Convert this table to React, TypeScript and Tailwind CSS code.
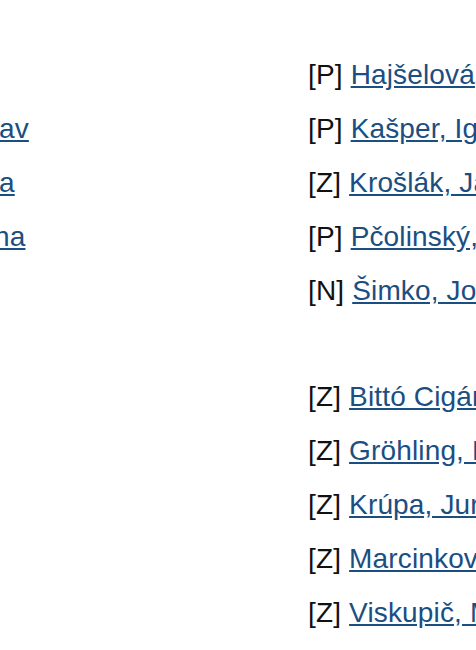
import React from "react";

const linkCls = "text-[#1b4e81] underline decoration-[#1b4e81]";

const groupA = [
  ["P", "Hajšelová"],
  ["P", "Kašper, Ig"],
  ["Z", "Krošlák, Ja"],
  ["P", "Pčolinský,"],
  ["N", "Šimko, Jo"],
];
const groupB = [
  ["Z", "Bittó Cigán"],
  ["Z", "Gröhling, B"],
  ["Z", "Krúpa, Jur"],
  ["Z", "Marcinkov"],
  ["Z", "Viskupič, M"],
];

function Row({ tag, name }: { tag: string; name: string }) {
  return (
    <div className="h-[54px] leading-[54px] whitespace-nowrap">
      <span className="text-[#111]">[{tag}]</span>{" "}
      <a href="#" className={linkCls}>
        {name}
      </a>
    </div>
  );
}

export default function App() {
  return (
    <div
      className="w-[476px] h-[650px] overflow-hidden bg-white flex text-[28px] tracking-[0.15px]"
      style={{ fontFamily: '"Liberation Sans", Arial, sans-serif' }}
    >
      <div className="w-[308px] shrink-0 pt-[48px]">
        <div className="h-[54px]" />
        <div className="h-[54px] leading-[54px] whitespace-nowrap -ml-[1px]">
          <a href="#" className={linkCls}>av</a>
        </div>
        <div className="h-[54px] leading-[54px] whitespace-nowrap -ml-[1px]">
          <a href="#" className={linkCls}>a</a>
        </div>
        <div className="h-[54px] leading-[54px] whitespace-nowrap -ml-[6px]">
          <a href="#" className={linkCls}>na</a>
        </div>
      </div>
      <div className="flex-1 min-w-0 overflow-hidden pt-[48px]">
        {groupA.map(([t, n]) => (
          <Row key={n} tag={t} name={n} />
        ))}
        <div className="h-[52px]" />
        {groupB.map(([t, n]) => (
          <Row key={n} tag={t} name={n} />
        ))}
      </div>
    </div>
  );
}
